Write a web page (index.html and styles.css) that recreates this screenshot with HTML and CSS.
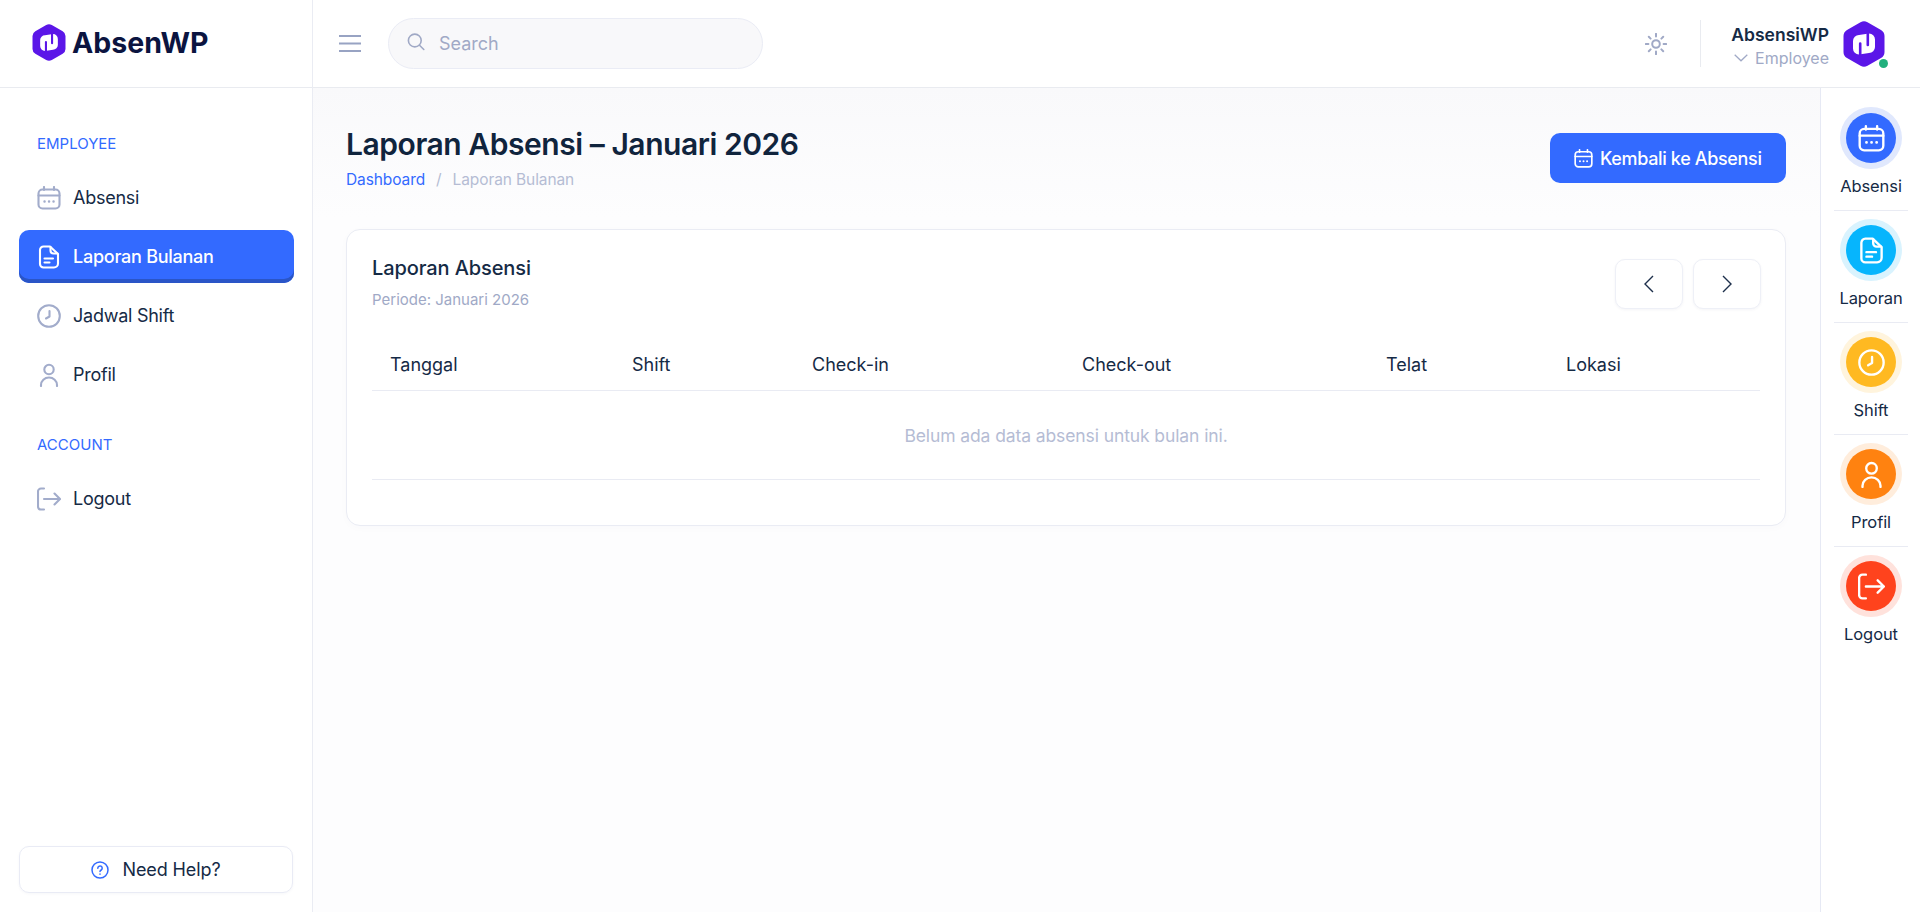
FILE: index.html
```html
<!DOCTYPE html>
<html>
<head>
    <title>Laporan Absensi - AbsenWP</title>
    <link rel="stylesheet" href="styles.css">
</head>
<body>
    <aside class="sidebar">
        <div class="brand">
            <svg class="brand-logo" viewBox="0 0 42 46"><use href="#logo"></use></svg>
            <span class="brand-name">AbsenWP</span>
        </div>
        <nav class="side-nav">
            <div class="nav-label">EMPLOYEE</div>
            <a class="nav-item" href="#"><svg class="ico" viewBox="0 0 24 24"><use href="#i-cal"></use></svg>Absensi</a>
            <a class="nav-item active" href="#"><svg class="ico" viewBox="0 0 24 24"><use href="#i-doc"></use></svg>Laporan Bulanan</a>
            <a class="nav-item" href="#"><svg class="ico" viewBox="0 0 24 24"><use href="#i-clock"></use></svg>Jadwal Shift</a>
            <a class="nav-item" href="#"><svg class="ico" viewBox="0 0 24 24"><use href="#i-user"></use></svg>Profil</a>
            <div class="nav-label second">ACCOUNT</div>
            <a class="nav-item" href="#"><svg class="ico" viewBox="0 0 24 24"><use href="#i-out"></use></svg>Logout</a>
        </nav>
        <a class="help" href="#">
            <svg class="help-ico" viewBox="0 0 18 18" fill="none" stroke="#336aff" stroke-width="1.5" stroke-linecap="round"><circle cx="9" cy="9" r="8"></circle><path d="M6.8 7.2a2.2 2.2 0 1 1 3.4 1.8c-.8.5-1.2.9-1.2 1.6"></path><path d="M9 13.1v.1"></path></svg>
            Need Help?
        </a>
    </aside>

    <div class="page">
        <header class="topbar">
            <svg class="burger" viewBox="0 0 22 17" stroke="#98a3c3" stroke-width="2"><path d="M0 1h22M0 8.5h22M0 16h22"></path></svg>
            <div class="search">
                <svg class="search-ico" viewBox="0 0 18 18" fill="none" stroke="#a0a9c6" stroke-width="1.6" stroke-linecap="round"><circle cx="7.8" cy="7.5" r="6.4"></circle><path d="M12.5 12.2l4.3 4.3"></path></svg>
                <input type="text" placeholder="Search">
            </div>
            <div class="top-right">
                <svg class="sun" viewBox="0 0 22 22" fill="none" stroke="#a0a9c6" stroke-width="2" stroke-linecap="round"><circle cx="11" cy="11" r="3.8"></circle><path d="M11 .8v2.6M11 18.6v2.6M.8 11h2.6M18.6 11h2.6M3.8 3.8l1.8 1.8M16.4 16.4l1.8 1.8M3.8 18.2l1.8-1.8M16.4 5.6l1.8-1.8"></path></svg>
                <div class="top-divider"></div>
                <div class="user">
                    <div class="user-name">AbsensiWP</div>
                    <div class="user-role">
                        <svg class="chev" viewBox="0 0 14 8" fill="none" stroke="#a0a9c6" stroke-width="1.3"><path d="M.7.8L7 6.8 13.3.8"></path></svg>
                        Employee
                    </div>
                </div>
                <div class="avatar">
                    <svg viewBox="0 0 42 46"><use href="#logo"></use></svg>
                    <span class="status"></span>
                </div>
            </div>
        </header>

        <div class="body-row">
            <main class="content">
                <div class="page-head">
                    <div>
                        <h1>Laporan Absensi – Januari 2026</h1>
                        <div class="crumbs"><a href="#">Dashboard</a><span class="sep">/</span><span>Laporan Bulanan</span></div>
                    </div>
                    <a class="btn-primary" href="#"><svg viewBox="0 0 24 24"><use href="#i-cal"></use></svg>Kembali ke Absensi</a>
                </div>

                <section class="card">
                    <div class="card-head">
                        <div>
                            <h2>Laporan Absensi</h2>
                            <p>Periode: Januari 2026</p>
                        </div>
                        <div class="pager">
                            <button type="button"><svg viewBox="0 0 10 18" fill="none" stroke="#1d2f4b" stroke-width="1.4"><path d="M9 1L1 9l8 8"></path></svg></button>
                            <button type="button"><svg viewBox="0 0 10 18" fill="none" stroke="#1d2f4b" stroke-width="1.4"><path d="M1 1l8 8-8 8"></path></svg></button>
                        </div>
                    </div>
                    <table>
                        <thead>
                            <tr>
                                <th class="col-date">Tanggal</th>
                                <th class="col-shift">Shift</th>
                                <th class="col-in">Check-in</th>
                                <th class="col-out">Check-out</th>
                                <th class="col-late">Telat</th>
                                <th>Lokasi</th>
                            </tr>
                        </thead>
                        <tbody>
                            <tr><td colspan="6">Belum ada data absensi untuk bulan ini.</td></tr>
                        </tbody>
                    </table>
                </section>
            </main>

            <aside class="quick">
                <a class="quick-item blue" href="#"><span class="bubble"><svg viewBox="0 0 24 24"><use href="#i-cal"></use></svg></span>Absensi</a>
                <a class="quick-item sky" href="#"><span class="bubble"><svg viewBox="0 0 24 24"><use href="#i-doc"></use></svg></span>Laporan</a>
                <a class="quick-item amber" href="#"><span class="bubble"><svg viewBox="0 0 24 24"><use href="#i-clock"></use></svg></span>Shift</a>
                <a class="quick-item orange" href="#"><span class="bubble"><svg viewBox="0 0 24 24"><use href="#i-user"></use></svg></span>Profil</a>
                <a class="quick-item red" href="#"><span class="bubble"><svg viewBox="0 0 24 24"><use href="#i-out"></use></svg></span>Logout</a>
            </aside>
        </div>
    </div>

    <!-- shared icons -->
    <svg class="defs" width="0" height="0">
        <defs>
            <g id="logo">
                <path d="M17.5 1.2a7 7 0 0 1 7 0l13.5 7.7a7 7 0 0 1 3.5 6v16.2a7 7 0 0 1-3.5 6l-13.5 7.7a7 7 0 0 1-7 0L4 37.1a7 7 0 0 1-3.5-6V14.9a7 7 0 0 1 3.5-6z" fill="#5b16e8"></path>
                <path d="M10 20a6 6 0 0 1 6-6l10-1.5a6 6 0 0 1 6 6V26a6 6 0 0 1-6 6l-10 1.500a6 6 0 0 1-6-6z" fill="#fff"></path>
                <path d="M17.2 35V22.500M24.800 11v13" stroke="#5b16e8" stroke-width="2.6" stroke-linecap="round" fill="none"></path>
            </g>
            <g id="i-cal" fill="none" stroke="currentColor" stroke-width="2.1" stroke-linecap="round">
                <rect x="1.5" y="3.5" width="21" height="19" rx="4"></rect>
                <path d="M1.5 9.5h21M7 1v3M17 1v3"></path>
                <path d="M7.5 15.5h.1M12 15.5h.1M16.5 15.5h.1" stroke-width="2.4"></path>
            </g>
            <g id="i-doc" fill="none" stroke="currentColor" stroke-width="2.1" stroke-linecap="round" stroke-linejoin="round">
                <path d="M6.5 1.5H13l8 7.5v9.5a4 4 0 0 1-4 4H6.5A3.5 3.5 0 0 1 3 19V5a3.5 3.5 0 0 1 3.5-3.5z"></path>
                <path d="M13.5 2v3.5a3 3 0 0 0 3 3h4"></path>
                <path d="M7.5 13.5H16M7.5 17.5h5"></path>
            </g>
            <g id="i-clock" fill="none" stroke="currentColor" stroke-width="2.1" stroke-linecap="round" stroke-linejoin="round">
                <circle cx="12" cy="12" r="10.8"></circle>
                <path d="M12.5 7v5.5L9 14.5"></path>
            </g>
            <g id="i-user" fill="none" stroke="currentColor" stroke-width="2.1" stroke-linecap="round">
                <circle cx="12" cy="6.5" r="4.7"></circle>
                <path d="M4 23v-1a8 7.5 0 0 1 16 0v1"></path>
            </g>
            <g id="i-out" fill="none" stroke="currentColor" stroke-width="2.1" stroke-linecap="round" stroke-linejoin="round">
                <path d="M7 1.5H4a3 3 0 0 0-3 3v15a3 3 0 0 0 3 3h3"></path>
                <path d="M7 12h16M17.5 6.5L23 12l-5.5 5.5"></path>
            </g>
        </defs>
    </svg>
</body>
</html>
```

FILE: styles.css
```css
* {
    box-sizing: border-box;
}

body {
    font-family: Inter, 'Noto Sans', sans-serif;
    margin: 0;
    height: 912px;
    display: flex;
    overflow: hidden;
    background: #fff;
    color: #152a45;
}

a {
    color: inherit;
    text-decoration: none;
}

.defs {
    position: absolute;
}

/* left sidebar */
.sidebar {
    width: 313px;
    flex-shrink: 0;
    display: flex;
    flex-direction: column;
    border-right: 1px solid #eaecf3;
    background: #fff;
}

.brand {
    height: 88px;
    flex-shrink: 0;
    display: flex;
    align-items: center;
    gap: 6px;
    padding: 0 0 2px 32px;
    border-bottom: 1px solid #e9ebf0;
}

.brand-logo {
    width: 34px;
    height: 37px;
}

.brand-name {
    font-size: 28.5px;
    font-weight: 700;
    color: #0b1440;
}

.side-nav {
    flex: 1;
    padding: 47px 18px 0 19px;
}

.nav-label {
    font-size: 15px;
    color: #336aff;
    padding-left: 18px;
    line-height: 18px;
    margin-bottom: 18px;
}

.nav-label.second {
    margin-top: 35px;
}

.nav-item {
    display: flex;
    align-items: center;
    gap: 12px;
    height: 53px;
    margin-bottom: 6px;
    padding: 0 18px;
    font-size: 18px;
    font-weight: 400;
    letter-spacing: -0.25px;
    border-radius: 10px;
    color: #152a45;
}

.nav-item .ico {
    width: 24px;
    height: 24px;
    color: #a2accb;
    flex-shrink: 0;
}

.nav-item.active {
    background: #336aff;
    box-shadow: inset 0 -4px 0 #2a55c7;
    color: #fff;
    font-weight: 500;
}

.nav-item.active .ico {
    color: #fff;
}

.help {
    margin: 0 19px 19px;
    height: 47px;
    display: flex;
    align-items: center;
    justify-content: center;
    gap: 13px;
    font-size: 18px;
    letter-spacing: -0.1px;
    border: 1px solid #e9ebf5;
    border-radius: 10px;
    box-shadow: 0 1px 3px rgba(30, 40, 90, 0.04);
}

.help-ico {
    width: 18px;
    height: 18px;
}

/* top bar */
.page {
    flex: 1;
    min-width: 0;
    display: flex;
    flex-direction: column;
}

.topbar {
    height: 88px;
    flex-shrink: 0;
    display: flex;
    align-items: center;
    padding: 0 35px 0 26px;
    border-bottom: 1px solid #e9ebf0;
    background: #fff;
}

.burger {
    width: 22px;
    height: 17px;
}

.search {
    width: 375px;
    height: 51px;
    margin-left: 27px;
    display: flex;
    align-items: center;
    gap: 12px;
    padding: 0 18px;
    background: #f8f8fa;
    border: 1px solid #eaecf5;
    border-radius: 26px;
}

.search-ico {
    width: 18px;
    height: 18px;
    margin-bottom: 3px;
}

.search input {
    border: none;
    background: none;
    outline: none;
    font: inherit;
    font-size: 18px;
    flex: 1;
    min-width: 0;
}

.search input::placeholder {
    color: #a0a9c6;
    opacity: 1;
}

.top-right {
    margin-left: auto;
    display: flex;
    align-items: center;
}

.sun {
    width: 22px;
    height: 22px;
    margin-right: -1px;
}

.top-divider {
    width: 1px;
    height: 47px;
    background: #e9ebf0;
    margin: 0 30px 0 34px;
}

.user {
    text-align: right;
    margin: 5px 14px 0 0;
}

.user-name {
    font-size: 17.5px;
    font-weight: 600;
    line-height: 24px;
    color: #152a45;
}

.user-role {
    display: flex;
    align-items: center;
    justify-content: flex-end;
    gap: 7px;
    font-size: 16px;
    line-height: 23px;
    color: #a0a9c6;
}

.chev {
    width: 14px;
    height: 8px;
}

.avatar {
    position: relative;
    width: 42px;
    height: 46px;
}

.avatar svg {
    display: block;
    width: 42px;
    height: 46px;
}

.status {
    position: absolute;
    right: -3px;
    bottom: -1px;
    width: 9px;
    height: 9px;
    border-radius: 50%;
    background: #22b07d;
}

/* main area */
.body-row {
    flex: 1;
    min-height: 0;
    display: flex;
}

.content {
    flex: 1;
    min-width: 0;
    padding: 35px 34px 0 33px;
    background: linear-gradient(#f9f9fb, #fdfdfe 130px);
}

.page-head {
    display: flex;
    justify-content: space-between;
    align-items: flex-start;
    margin-bottom: 39px;
}

h1 {
    font-size: 30px;
    font-weight: 600;
    letter-spacing: -0.45px;
    line-height: 42px;
    margin: 0;
    color: #10243d;
}

.crumbs {
    margin-top: 5px;
    font-size: 15.5px;
    line-height: 20px;
    color: #b5bcd4;
    letter-spacing: -0.1px;
}

.crumbs a {
    color: #336aff;
}

.crumbs .sep {
    margin: 0 11px;
}

.btn-primary {
    display: flex;
    align-items: center;
    gap: 7px;
    width: 236px;
    height: 50px;
    margin-top: 10px;
    padding-left: 24px;
    background: #336aff;
    color: #fff;
    font-size: 18px;
    font-weight: 500;
    letter-spacing: -0.35px;
    border-radius: 10px;
}

.btn-primary svg {
    width: 19px;
    height: 19px;
    color: #fff;
}

.card {
    height: 297px;
    padding: 24px 25px;
    background: #fff;
    border: 1px solid #eaecf4;
    border-radius: 14px;
    box-shadow: 0 2px 8px rgba(30, 40, 90, 0.02);
}

.card-head {
    display: flex;
    justify-content: space-between;
    align-items: flex-start;
}

.card-head h2 {
    margin: 0;
    font-size: 20px;
    font-weight: 500;
    line-height: 28px;
    letter-spacing: -0.1px;
    color: #152a45;
}

.card-head p {
    margin: 8px 0 0;
    font-size: 15px;
    line-height: 20px;
    color: #a0a9c6;
}

.pager {
    display: flex;
    gap: 10px;
    margin: 5px -1px 0 0;
}

.pager button {
    width: 68px;
    height: 50px;
    display: flex;
    align-items: center;
    justify-content: center;
    background: #fff;
    border: 1px solid #eef0f7;
    border-radius: 10px;
    box-shadow: 0 1px 3px rgba(30, 40, 90, 0.05);
    padding: 0;
}

.pager svg {
    width: 10px;
    height: 18px;
}

table {
    width: 100%;
    margin-top: 19px;
    border-collapse: collapse;
    table-layout: fixed;
}

th {
    height: 61px;
    padding: 10px 18px 0;
    text-align: left;
    font-size: 18px;
    font-weight: 400;
    color: #152a45;
    border-bottom: 1px solid #e9ebf3;
}

.col-date {
    width: 242px;
}

.col-shift {
    width: 180px;
}

.col-in {
    width: 270px;
}

.col-out {
    width: 304px;
}

.col-late {
    width: 180px;
}

td {
    height: 89px;
    padding-top: 2px;
    text-align: center;
    font-size: 17.5px;
    color: #b5bcd4;
    letter-spacing: -0.1px;
    border-bottom: 1px solid #e9ebf3;
}

/* right quick bar */
.quick {
    width: 100px;
    flex-shrink: 0;
    padding: 11px 12px 0 13px;
    background: #fff;
    border-left: 1px solid #e6e9f4;
}

.quick-item {
    display: flex;
    flex-direction: column;
    align-items: center;
    height: 112px;
    padding-top: 8px;
    font-size: 16.5px;
    line-height: 22px;
    color: #152a45;
    border-bottom: 1px solid #e9ebf3;
    letter-spacing: -0.1px;
}

.quick-item:last-child {
    border-bottom: none;
}

.bubble {
    width: 50px;
    height: 50px;
    margin: 6px 0 12px;
    display: flex;
    align-items: center;
    justify-content: center;
    border-radius: 50%;
    flex-shrink: 0;
}

.bubble svg {
    width: 27px;
    height: 27px;
    color: #fff;
}

.blue .bubble {
    background: #336aff;
    box-shadow: 0 0 0 6px #e0e8fd;
}

.sky .bubble {
    background: #06b5fd;
    box-shadow: 0 0 0 6px #d9f3fe;
}

.amber .bubble {
    background: #ffb921;
    box-shadow: 0 0 0 6px #fff4dd;
}

.orange .bubble {
    background: #ff8210;
    box-shadow: 0 0 0 6px #ffeddc;
}

.red .bubble {
    background: #ff431d;
    box-shadow: 0 0 0 6px #ffe2dc;
}
```
